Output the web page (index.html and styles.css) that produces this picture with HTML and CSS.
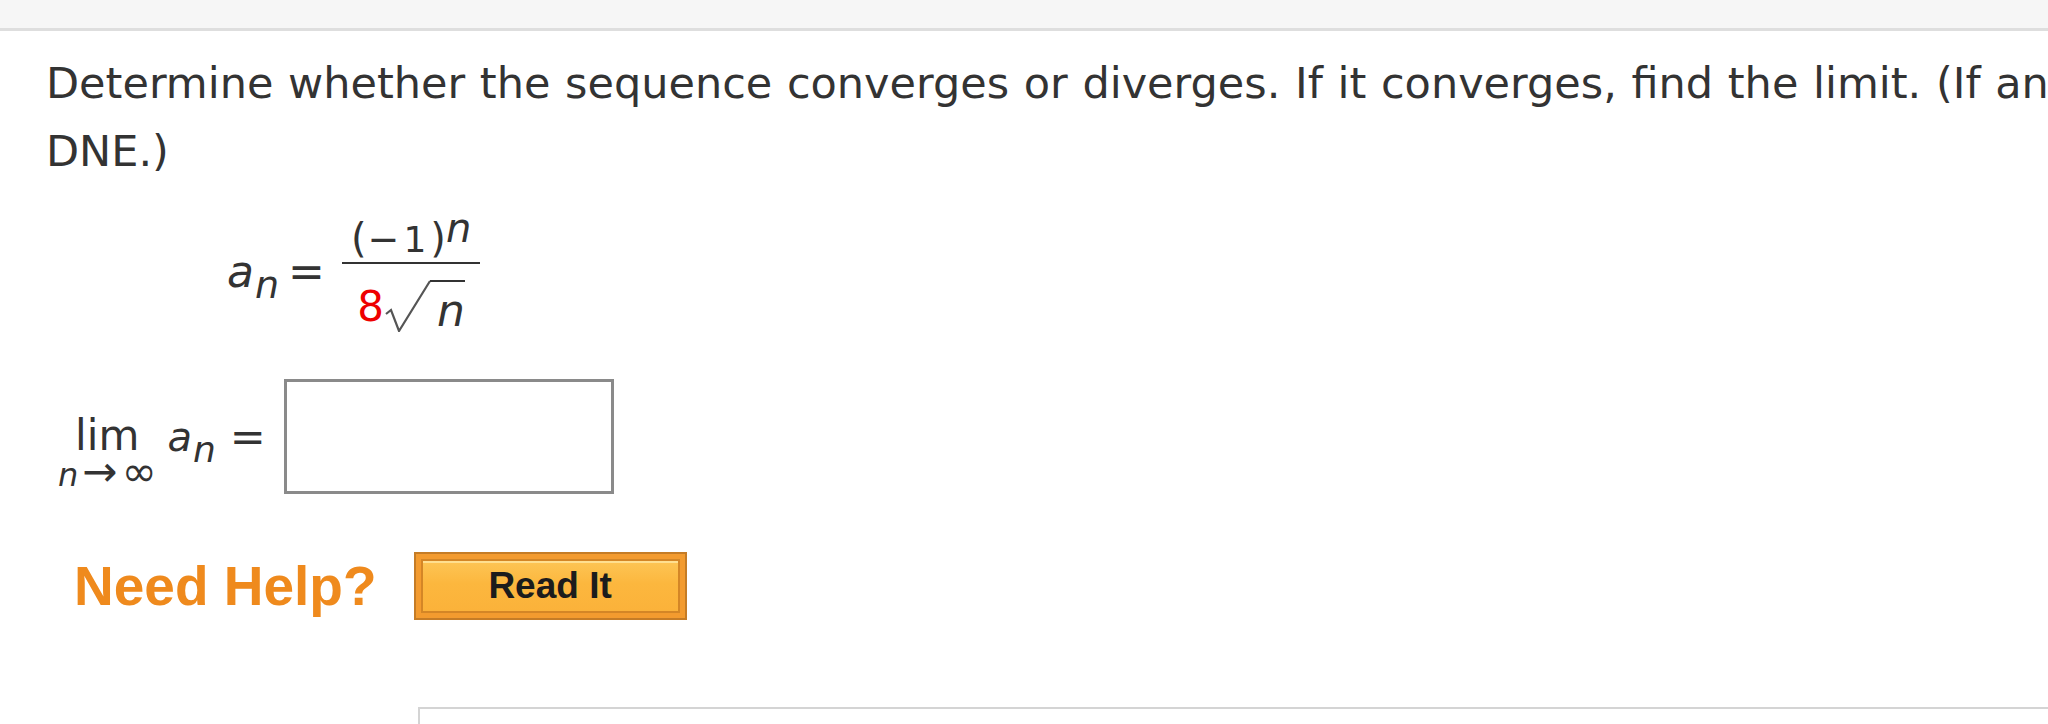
FILE: index.html
```html
<!DOCTYPE html>
<html lang="en">
<head>
<meta charset="utf-8">
<title>Sequence question</title>
<link rel="stylesheet" href="styles.css">
</head>
<body>
<div class="topbar"></div>
<main class="content">
  <p class="question">Determine whether the sequence converges or diverges. If it converges, find the limit. (If an answer does not exist, enter<br>DNE.)</p>

  <div class="formula">
    <div class="lhs"><i class="var">a</i><i class="sub">n</i><span class="eq">=</span></div>
    <div class="frac">
      <div class="num"><span class="paren">(</span><span class="minus">&minus;</span><span class="one">1</span><span class="paren">)</span><i class="sup">n</i></div>
      <div class="bar"></div>
      <div class="den">
        <span class="eight">8</span>
        <svg class="radical" width="46" height="52" viewBox="0 0 46 52" aria-hidden="true">
          <path d="M1 34 L6 30 L14 51 L45 1" fill="none" stroke="#555" stroke-width="2.2" stroke-linejoin="miter"/>
        </svg>
        <span class="radicand"><i>n</i></span>
      </div>
    </div>
  </div>

  <div class="limit-row">
    <div class="lim">
      <span class="lim-word">lim</span>
      <span class="under"><i class="un">n</i><span class="arrow">&rarr;</span><span class="inf">&infin;</span></span>
    </div>
    <div class="lhs2"><i class="var2">a</i><i class="sub2">n</i><span class="eq2">=</span></div>
    <div class="answer-box"></div>
  </div>

  <div class="help-row">
    <span class="need-help">Need Help?</span>
    <div class="read-btn"><div class="read-inner">Read It</div></div>
  </div>

  <div class="next-box"></div>
</main>
</body>
</html>
```
FILE: styles.css
```css
html, body {
  margin: 0;
  padding: 0;
  background: #ffffff;
  overflow: hidden;
}
body {
  width: 2048px;
  height: 724px;
  font-family: "DejaVu Sans", Verdana, sans-serif;
  color: #333333;
}
.topbar {
  height: 28px;
  background: #f6f6f6;
  border-bottom: 3px solid #dedede;
}
.content {
  padding-left: 46px;
}
.question {
  margin: 18px 0 0 0;
  font-size: 43px;
  line-height: 68px;
  word-spacing: 1px;
  white-space: nowrap;
}

/* formula a_n = (-1)^n / 8 sqrt(n) */
.formula {
  display: flex;
  align-items: flex-start;
  margin: 21px 0 0 181px;
}
.lhs {
  margin-top: 44px;
  font-size: 44px;
  line-height: 44px;
  white-space: nowrap;
}
.var { font-style: italic; }
.sub {
  font-style: italic;
  font-size: 38px;
  line-height: 0;
  vertical-align: -11px;
  margin-left: 1px;
}
.eq {
  display: inline-block;
  margin-left: 9px;
}
.frac {
  display: flex;
  flex-direction: column;
  align-items: stretch;
  margin-left: 17px;
}
.num {
  font-size: 40px;
  line-height: 44px;
  text-align: center;
  padding: 0 9px;
  white-space: nowrap;
}
.paren { font-size: 40px; }
.minus { font-size: 38px; margin: 0 1px; }
.one { font-size: 36px; margin: 0 4px 0 3px; }
.sup {
  font-style: italic;
  font-size: 40px;
  vertical-align: 10px;
}
.bar {
  height: 2px;
  background: #333333;
}
.den {
  display: flex;
  align-items: flex-start;
  justify-content: center;
  padding-top: 16px;
}
.eight {
  color: #ee0000;
  font-size: 42px;
  line-height: 42px;
  margin-top: 6px;
  margin-right: 1px;
}
.radical {
  display: block;
}
.radicand {
  border-top: 2px solid #333333;
  padding: 7px 0 0 7px;
  font-size: 44px;
  line-height: 44px;
  margin-left: -1px;
}

/* limit row */
.limit-row {
  display: flex;
  align-items: flex-start;
  margin: 46px 0 0 12px;
}
.lim {
  display: flex;
  flex-direction: column;
  align-items: center;
  margin-top: 37px;
}
.lim-word {
  font-size: 42px;
  line-height: 40px;
}
.under {
  font-size: 32px;
  line-height: 32px;
  white-space: nowrap;
}
.un { font-style: italic; }
.arrow { font-size: 42px; margin: 0 4px 0 4px; }
.inf { font-size: 42px; }
.lhs2 {
  margin: 37px 0 0 11px;
  font-size: 40px;
  line-height: 40px;
  white-space: nowrap;
}
.var2 { font-style: italic; }
.sub2 {
  font-style: italic;
  font-size: 36px;
  line-height: 0;
  vertical-align: -11px;
  margin-left: 1px;
}
.eq2 {
  display: inline-block;
  font-size: 43px;
  margin-left: 14px;
}
.answer-box {
  width: 324px;
  height: 109px;
  border: 3px solid #8a8a8a;
  background: #ffffff;
  margin-left: 18px;
}

/* help row */
.help-row {
  display: flex;
  align-items: center;
  margin: 58px 0 0 28px;
}
.need-help {
  font-family: "Liberation Sans", Arial, sans-serif;
  font-weight: bold;
  font-size: 55px;
  line-height: 66px;
  color: #ef8a1d;
  white-space: nowrap;
}
.read-btn {
  width: 273px;
  height: 68px;
  margin-left: 37px;
  border: 2px solid #c57c26;
  background: #f39b2f;
  padding: 5px;
  box-sizing: border-box;
}
.read-inner {
  height: 100%;
  box-sizing: border-box;
  border: 2px solid #d48626;
  background: linear-gradient(#fdc555, #fcb73e 45%, #fbb23a);
  box-shadow: inset 0 2px 0 rgba(255, 235, 170, 0.7);
  display: flex;
  align-items: center;
  justify-content: center;
  font-family: "Liberation Sans", Arial, sans-serif;
  font-weight: bold;
  font-size: 37px;
  color: #1c1c1c;
}

.next-box {
  margin: 87px 0 0 372px;
  height: 120px;
  border-top: 2px solid #d4d4d4;
  border-left: 2px solid #d4d4d4;
}
```
